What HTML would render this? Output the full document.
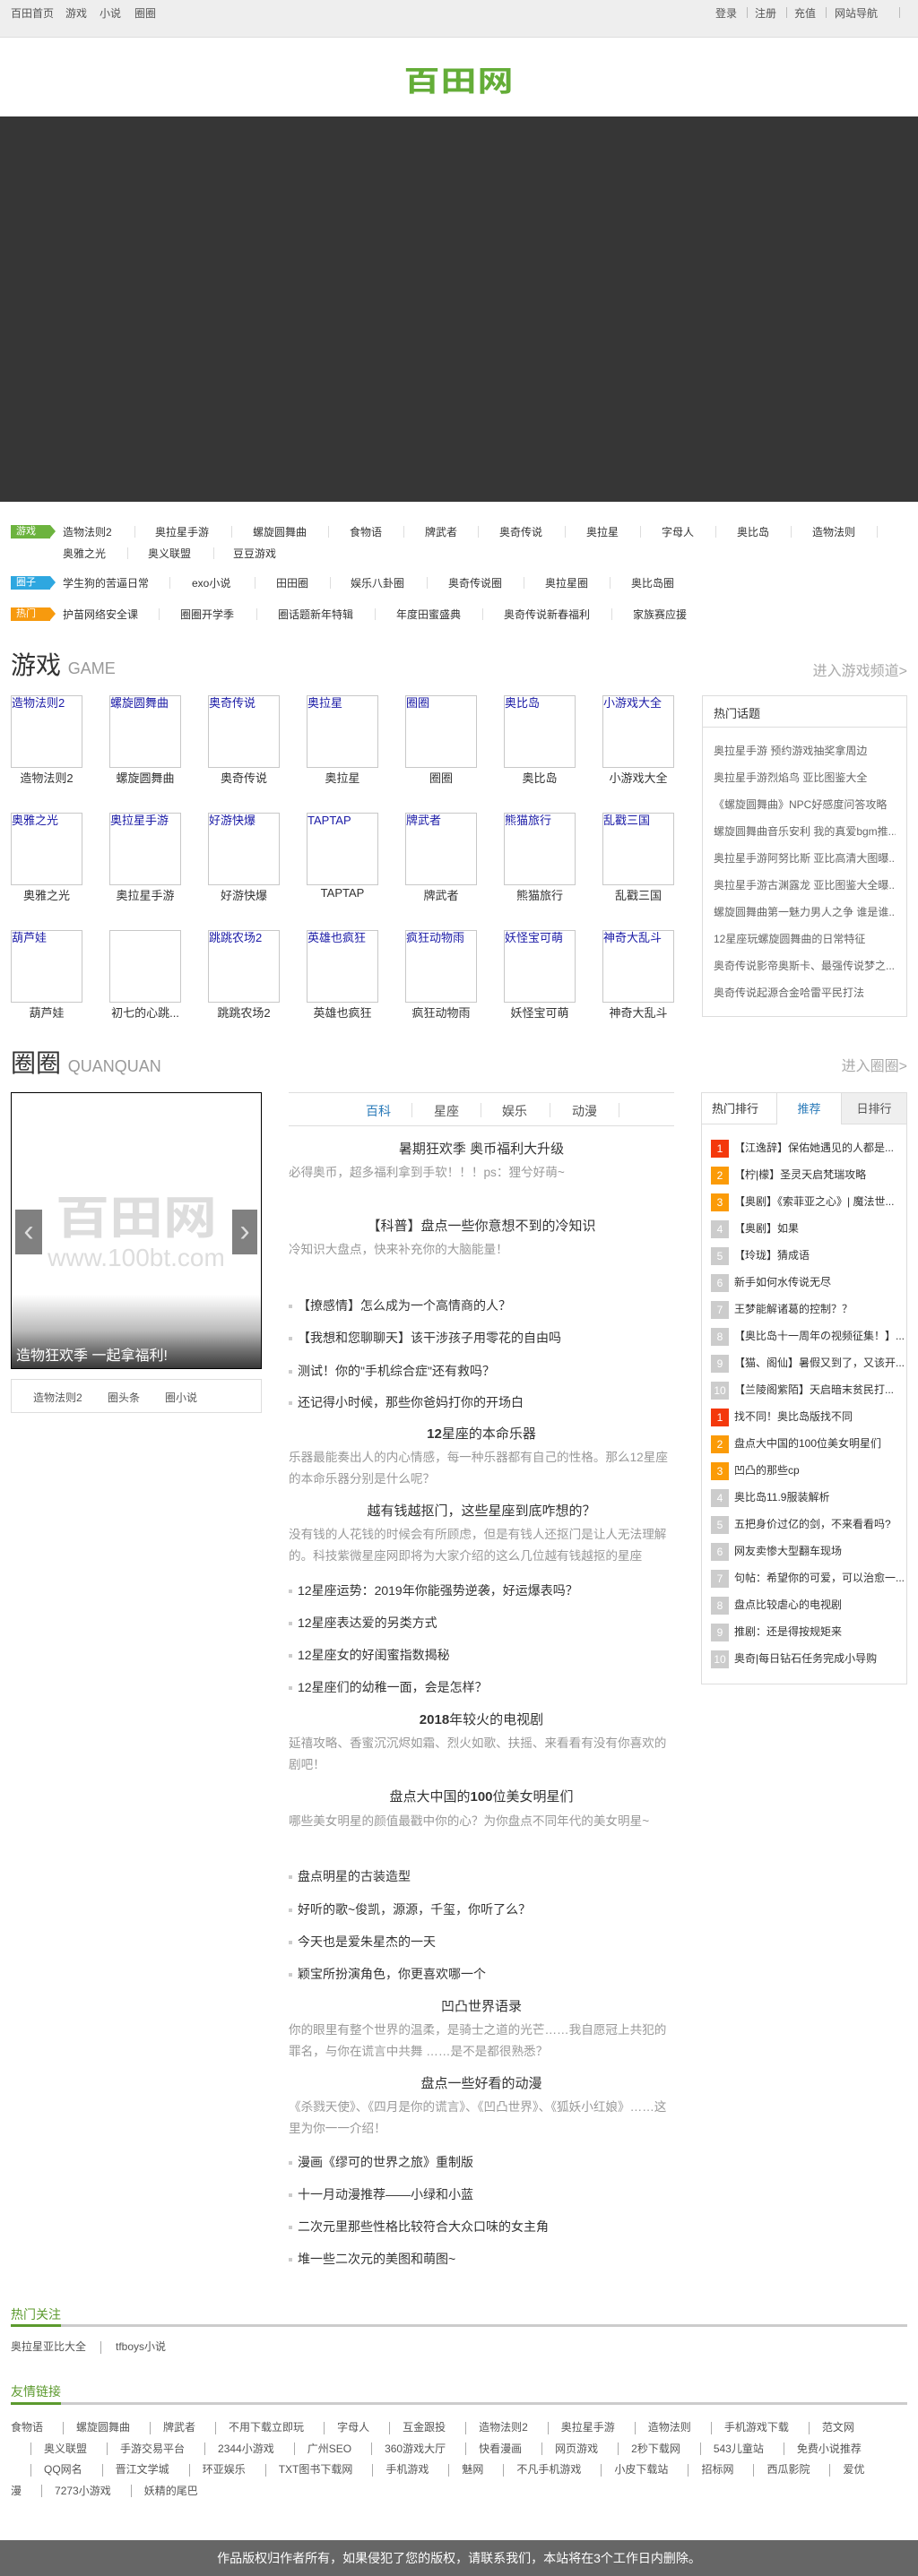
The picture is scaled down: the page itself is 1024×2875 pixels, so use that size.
<!DOCTYPE html>
<html><head><meta charset="utf-8">
<style>
*{margin:0;padding:0;box-sizing:border-box}
body{width:1024px;height:2875px;position:relative;background:#fff;font-family:"Liberation Sans","Noto Sans CJK SC",sans-serif;font-size:12px;color:#333;overflow:hidden}
.a{position:absolute;white-space:nowrap}
#top{position:absolute;left:0;top:0;width:1024px;height:42px;background:#eee;border-bottom:1px solid #ddd}
#top span{position:absolute;top:6px;font-size:12px;color:#555}
.sep{position:absolute;width:1px;height:12px;background:#bbb;top:8px}
.tag{position:absolute;left:12px;width:44px;height:15px;color:#fff;font-size:11px;line-height:15px;padding-left:6px}
.tag:after{content:"";position:absolute;right:-6px;top:0;border-left:6px solid;border-left-color:inherit;border-top:7.5px solid transparent;border-bottom:7.5px solid transparent}
.nl{position:absolute;font-size:12px;color:#333}
.ns{position:absolute;width:1px;height:13px;background:#ddd}
.cell{position:absolute;width:80px;height:81px;border:1px solid #c8c8c8;color:#1a1aa6;font-size:13px;line-height:16px;overflow:hidden;white-space:nowrap}
.lab{position:absolute;width:80px;text-align:center;font-size:13px;color:#333;white-space:nowrap}
.side li{list-style:none;height:30px;font-size:12px;color:#666;white-space:nowrap;overflow:hidden}
.rk{position:absolute;left:793px;font-size:12px;color:#333;white-space:nowrap}
.rk b{display:inline-block;width:20px;height:20px;line-height:20px;text-align:center;color:#fff;font-weight:normal;margin-right:6px;vertical-align:middle}
.t{position:absolute;left:322px;width:430px;text-align:center;font-size:15px;color:#333;white-space:nowrap}
.d{position:absolute;left:322px;width:430px;font-size:13.6px;line-height:24px;color:#999}
.li{position:absolute;left:322px;font-size:14px;color:#333;white-space:nowrap}
.li:before{content:"";display:inline-block;width:4px;height:4px;background:#ccc;margin-right:6px;vertical-align:middle}
.fl{position:absolute;left:12px;top:2698px;width:960px;font-size:12px;line-height:23.5px;color:#555;word-break:break-all}
.fl span{display:inline-block;width:1px;height:14px;background:#aaa;margin:0 14px 0 22px;vertical-align:middle}
</style></head><body>
<div id="top">
<span style="left:12px">百田首页</span><span style="left:73px">游戏</span><span style="left:111px">小说</span><span style="left:150px">圈圈</span>
<span style="left:798px">登录</span><div class="sep" style="left:833px"></div>
<span style="left:842px">注册</span><div class="sep" style="left:877px"></div>
<span style="left:886px">充值</span><div class="sep" style="left:921px"></div>
<span style="left:931px">网站导航</span><div class="sep" style="left:1003px"></div>
</div>
<div class="a" style="left:438px;top:68px;width:148px;text-align:center;font-size:40px;font-weight:bold;color:#64ad38;letter-spacing:1px;line-height:46px;transform:scaleY(0.8)">百田网</div>
<div class="a" style="left:0;top:130px;width:1024px;height:430px;background:#363636"></div>

<div class="tag" style="top:586px;background:#6cb33e;border-left-color:#6cb33e">游戏</div>
<div class="nl" style="left:70px;top:585px">造物法则2</div><div class="ns" style="left:150px;top:587px"></div>
<div class="nl" style="left:173px;top:585px">奥拉星手游</div><div class="ns" style="left:258px;top:587px"></div>
<div class="nl" style="left:282px;top:585px">螺旋圆舞曲</div><div class="ns" style="left:366px;top:587px"></div>
<div class="nl" style="left:390px;top:585px">食物语</div><div class="ns" style="left:450px;top:587px"></div>
<div class="nl" style="left:474px;top:585px">牌武者</div><div class="ns" style="left:533px;top:587px"></div>
<div class="nl" style="left:557px;top:585px">奥奇传说</div><div class="ns" style="left:630px;top:587px"></div>
<div class="nl" style="left:654px;top:585px">奥拉星</div><div class="ns" style="left:714px;top:587px"></div>
<div class="nl" style="left:738px;top:585px">字母人</div><div class="ns" style="left:798px;top:587px"></div>
<div class="nl" style="left:822px;top:585px">奥比岛</div><div class="ns" style="left:882px;top:587px"></div>
<div class="nl" style="left:906px;top:585px">造物法则</div><div class="ns" style="left:978px;top:587px"></div>
<div class="nl" style="left:70px;top:609px">奥雅之光</div><div class="ns" style="left:142px;top:611px"></div>
<div class="nl" style="left:165px;top:609px">奥义联盟</div><div class="ns" style="left:238px;top:611px"></div>
<div class="nl" style="left:260px;top:609px">豆豆游戏</div>

<div class="tag" style="top:643px;background:#2ea7e0;border-left-color:#2ea7e0">圈子</div>
<div class="nl" style="left:70px;top:642px">学生狗的苦逼日常</div><div class="ns" style="left:189px;top:644px"></div>
<div class="nl" style="left:214px;top:642px">exo小说</div><div class="ns" style="left:284px;top:644px"></div>
<div class="nl" style="left:308px;top:642px">田田圈</div><div class="ns" style="left:368px;top:644px"></div>
<div class="nl" style="left:391px;top:642px">娱乐八卦圈</div><div class="ns" style="left:476px;top:644px"></div>
<div class="nl" style="left:500px;top:642px">奥奇传说圈</div><div class="ns" style="left:584px;top:644px"></div>
<div class="nl" style="left:608px;top:642px">奥拉星圈</div><div class="ns" style="left:680px;top:644px"></div>
<div class="nl" style="left:704px;top:642px">奥比岛圈</div>

<div class="tag" style="top:678px;background:#f79a0e;border-left-color:#f79a0e">热门</div>
<div class="nl" style="left:70px;top:677px">护苗网络安全课</div><div class="ns" style="left:177px;top:679px"></div>
<div class="nl" style="left:201px;top:677px">圈圈开学季</div><div class="ns" style="left:286px;top:679px"></div>
<div class="nl" style="left:310px;top:677px">圈话题新年特辑</div><div class="ns" style="left:418px;top:679px"></div>
<div class="nl" style="left:442px;top:677px">年度田蜜盛典</div><div class="ns" style="left:538px;top:679px"></div>
<div class="nl" style="left:562px;top:677px">奥奇传说新春福利</div><div class="ns" style="left:682px;top:679px"></div>
<div class="nl" style="left:706px;top:677px">家族赛应援</div>

<div class="a" style="left:12px;top:726px;font-size:28px;color:#333;line-height:34px">游戏 <span style="font-size:18px;color:#999">GAME</span></div>
<div class="a" style="right:12px;top:735px;font-size:16px;color:#aaa">进入游戏频道&gt;</div>

<div class="cell" style="left:12px;top:776px">造物法则2</div><div class="lab" style="left:12px;top:858px">造物法则2</div>
<div class="cell" style="left:122px;top:776px">螺旋圆舞曲</div><div class="lab" style="left:122px;top:858px">螺旋圆舞曲</div>
<div class="cell" style="left:232px;top:776px">奥奇传说</div><div class="lab" style="left:232px;top:858px">奥奇传说</div>
<div class="cell" style="left:342px;top:776px">奥拉星</div><div class="lab" style="left:342px;top:858px">奥拉星</div>
<div class="cell" style="left:452px;top:776px">圈圈</div><div class="lab" style="left:452px;top:858px">圈圈</div>
<div class="cell" style="left:562px;top:776px">奥比岛</div><div class="lab" style="left:562px;top:858px">奥比岛</div>
<div class="cell" style="left:672px;top:776px">小游戏大全</div><div class="lab" style="left:672px;top:858px">小游戏大全</div>
<div class="cell" style="left:12px;top:907px">奥雅之光</div><div class="lab" style="left:12px;top:989px">奥雅之光</div>
<div class="cell" style="left:122px;top:907px">奥拉星手游</div><div class="lab" style="left:122px;top:989px">奥拉星手游</div>
<div class="cell" style="left:232px;top:907px">好游快爆</div><div class="lab" style="left:232px;top:989px">好游快爆</div>
<div class="cell" style="left:342px;top:907px">TAPTAP</div><div class="lab" style="left:342px;top:989px">TAPTAP</div>
<div class="cell" style="left:452px;top:907px">牌武者</div><div class="lab" style="left:452px;top:989px">牌武者</div>
<div class="cell" style="left:562px;top:907px">熊猫旅行</div><div class="lab" style="left:562px;top:989px">熊猫旅行</div>
<div class="cell" style="left:672px;top:907px">乱戳三国</div><div class="lab" style="left:672px;top:989px">乱戳三国</div>
<div class="cell" style="left:12px;top:1038px">葫芦娃</div><div class="lab" style="left:12px;top:1120px">葫芦娃</div>
<div class="cell" style="left:122px;top:1038px"></div><div class="lab" style="left:122px;top:1120px">初七的心跳...</div>
<div class="cell" style="left:232px;top:1038px">跳跳农场2</div><div class="lab" style="left:232px;top:1120px">跳跳农场2</div>
<div class="cell" style="left:342px;top:1038px">英雄也疯狂</div><div class="lab" style="left:342px;top:1120px">英雄也疯狂</div>
<div class="cell" style="left:452px;top:1038px">疯狂动物雨</div><div class="lab" style="left:452px;top:1120px">疯狂动物雨</div>
<div class="cell" style="left:562px;top:1038px">妖怪宝可萌</div><div class="lab" style="left:562px;top:1120px">妖怪宝可萌</div>
<div class="cell" style="left:672px;top:1038px">神奇大乱斗</div><div class="lab" style="left:672px;top:1120px">神奇大乱斗</div>

<div class="a side" style="left:783px;top:776px;width:229px;height:359px;border:1px solid #ddd">
<div style="height:35px;border-bottom:1px solid #ddd;padding:9px 12px;font-size:13px;color:#333">热门话题</div>
<ul style="padding:17px 12px 0">
<li>奥拉星手游 预约游戏抽奖拿周边</li><li>奥拉星手游烈焰鸟 亚比图鉴大全</li><li>《螺旋圆舞曲》NPC好感度问答攻略</li><li>螺旋圆舞曲音乐安利 我的真爱bgm推...</li><li>奥拉星手游阿努比斯 亚比高清大图曝...</li><li>奥拉星手游古渊露龙 亚比图鉴大全曝...</li><li>螺旋圆舞曲第一魅力男人之争 谁是谁...</li><li>12星座玩螺旋圆舞曲的日常特征</li><li>奥奇传说影帝奥斯卡、最强传说梦之...</li><li>奥奇传说起源合金哈雷平民打法</li>
</ul></div>

<div class="a" style="left:12px;top:1170px;font-size:28px;color:#333;line-height:34px">圈圈 <span style="font-size:18px;color:#999">QUANQUAN</span></div>
<div class="a" style="right:12px;top:1176px;font-size:16px;color:#aaa">进入圈圈&gt;</div>

<div class="a" style="left:12px;top:1219px;width:280px;height:309px;border:1px solid #000;background:linear-gradient(#fff 0,#fff 225px,#bbb 265px,#777 285px,#333 309px);overflow:hidden">
<div class="a" style="left:29px;top:110px;width:220px;text-align:center;font-size:60px;font-weight:bold;color:#ddd;line-height:60px;transform:scaleY(0.85)">百田网</div>
<div class="a" style="left:29px;top:168px;width:220px;text-align:center;font-size:28px;color:#ddd">www.100bt.com</div>
<div class="a" style="left:4px;top:130px;width:30px;height:50px;background:#808080;color:#ddd;font-size:34px;line-height:48px;text-align:center">‹</div>
<div class="a" style="left:246px;top:130px;width:28px;height:50px;background:#808080;color:#ddd;font-size:34px;line-height:48px;text-align:center">›</div>
<div class="a" style="left:5px;top:279px;font-size:16px;color:#fff">造物狂欢季 一起拿福利!</div>
</div>
<div class="a" style="left:12px;top:1539px;width:280px;height:38px;border:1px solid #ddd;font-size:12px;color:#555">
<span class="a" style="left:24px;top:11px">造物法则2</span><span class="a" style="left:107px;top:11px">圈头条</span><span class="a" style="left:171px;top:11px">圈小说</span></div>

<div class="a" style="left:322px;top:1219px;width:430px;height:38px;border-top:1px solid #ddd;border-bottom:1px solid #ddd;font-size:14px;color:#555">
<span class="a" style="left:86px;top:10px;color:#2b7bb9">百科</span><div class="ns" style="left:137px;top:11px;height:16px"></div>
<span class="a" style="left:162px;top:10px">星座</span><div class="ns" style="left:214px;top:11px;height:16px"></div>
<span class="a" style="left:238px;top:10px">娱乐</span><div class="ns" style="left:291px;top:11px;height:16px"></div>
<span class="a" style="left:316px;top:10px">动漫</span><div class="ns" style="left:368px;top:11px;height:16px"></div>
</div>

<div class="t" style="top:1271px">暑期狂欢季 奥币福利大升级</div>
<div class="d" style="top:1297px">必得奥币，超多福利拿到手软！！！ps：狸兮好萌~</div>
<div class="t" style="top:1357px">【科普】盘点一些你意想不到的冷知识</div>
<div class="d" style="top:1383px">冷知识大盘点，快来补充你的大脑能量！</div>
<div class="li" style="top:1447px">【撩感情】怎么成为一个高情商的人？</div>
<div class="li" style="top:1483px">【我想和您聊聊天】该干涉孩子用零花的自由吗</div>
<div class="li" style="top:1520px">测试！你的"手机综合症"还有救吗？</div>
<div class="li" style="top:1555px">还记得小时候，那些你爸妈打你的开场白</div>
<div class="t" style="top:1589px"><b>12</b>星座的本命乐器</div>
<div class="d" style="top:1615px">乐器最能奏出人的内心情感，每一种乐器都有自己的性格。那么12星座的本命乐器分别是什么呢？</div>
<div class="t" style="top:1675px">越有钱越抠门，这些星座到底咋想的？</div>
<div class="d" style="top:1701px">没有钱的人花钱的时候会有所顾虑，但是有钱人还抠门是让人无法理解的。科技紫微星座网即将为大家介绍的这么几位越有钱越抠的星座</div>
<div class="li" style="top:1765px">12星座运势：2019年你能强势逆袭，好运爆表吗？</div>
<div class="li" style="top:1801px">12星座表达爱的另类方式</div>
<div class="li" style="top:1837px">12星座女的好闺蜜指数揭秘</div>
<div class="li" style="top:1873px">12星座们的幼稚一面，会是怎样？</div>
<div class="t" style="top:1908px"><b>2018</b>年较火的电视剧</div>
<div class="d" style="top:1934px">延禧攻略、香蜜沉沉烬如霜、烈火如歌、扶摇、来看看有没有你喜欢的剧吧！</div>
<div class="t" style="top:1994px">盘点大中国的<b>100</b>位美女明星们</div>
<div class="d" style="top:2021px">哪些美女明星的颜值最戳中你的心？为你盘点不同年代的美女明星~</div>
<div class="li" style="top:2084px">盘点明星的古装造型</div>
<div class="li" style="top:2121px">好听的歌~俊凯，源源，千玺，你听了么？</div>
<div class="li" style="top:2157px">今天也是爱朱星杰的一天</div>
<div class="li" style="top:2193px">颖宝所扮演角色，你更喜欢哪一个</div>
<div class="t" style="top:2228px">凹凸世界语录</div>
<div class="d" style="top:2254px">你的眼里有整个世界的温柔，是骑士之道的光芒……我自愿冠上共犯的罪名，与你在谎言中共舞 ……是不是都很熟悉？</div>
<div class="t" style="top:2314px">盘点一些好看的动漫</div>
<div class="d" style="top:2340px">《杀戮天使》、《四月是你的谎言》、《凹凸世界》、《狐妖小红娘》……这里为你一一介绍！</div>
<div class="li" style="top:2403px">漫画《缪可的世界之旅》重制版</div>
<div class="li" style="top:2439px">十一月动漫推荐——小绿和小蓝</div>
<div class="li" style="top:2475px">二次元里那些性格比较符合大众口味的女主角</div>
<div class="li" style="top:2511px">堆一些二次元的美图和萌图~</div>

<div class="a" style="left:782px;top:1219px;width:230px;height:661px;border:1px solid #ddd"></div>
<div class="a" style="left:783px;top:1220px;width:84px;height:35px;border-right:1px solid #ddd;border-bottom:1px solid #ddd;font-size:13px;line-height:35px;padding-left:11px">热门排行</div>
<div class="a" style="left:867px;top:1220px;width:71px;height:35px;font-size:13px;line-height:35px;text-align:center;color:#2b7bb9">推荐</div>
<div class="a" style="left:938px;top:1220px;width:73px;height:35px;background:#efefef;border-left:1px solid #ddd;border-bottom:1px solid #ddd;font-size:13px;line-height:35px;text-align:center;color:#555">日排行</div>
<div class="rk" style="top:1272px"><b style="background:#f4380c">1</b>【江逸辞】保佑她遇见的人都是...</div>
<div class="rk" style="top:1302px"><b style="background:#fb9b07">2</b>【柠|檬】圣灵天启梵瑞攻略</div>
<div class="rk" style="top:1332px"><b style="background:#fb9b07">3</b>【奥剧】《索菲亚之心》| 魔法世...</div>
<div class="rk" style="top:1362px"><b style="background:#ccc">4</b>【奥剧】如果</div>
<div class="rk" style="top:1392px"><b style="background:#ccc">5</b>【玲珑】猜成语</div>
<div class="rk" style="top:1422px"><b style="background:#ccc">6</b>新手如何水传说无尽</div>
<div class="rk" style="top:1452px"><b style="background:#ccc">7</b>王梦能解诸葛的控制？？</div>
<div class="rk" style="top:1482px"><b style="background:#ccc">8</b>【奥比岛十一周年の视频征集！】...</div>
<div class="rk" style="top:1512px"><b style="background:#ccc">9</b>【猫、阁仙】暑假又到了，又该开...</div>
<div class="rk" style="top:1542px"><b style="background:#ccc">10</b>【兰陵阁紫陌】天启暗末贫民打...</div>
<div class="rk" style="top:1572px"><b style="background:#f4380c">1</b>找不同！奥比岛版找不同</div>
<div class="rk" style="top:1602px"><b style="background:#fb9b07">2</b>盘点大中国的100位美女明星们</div>
<div class="rk" style="top:1632px"><b style="background:#fb9b07">3</b>凹凸的那些cp</div>
<div class="rk" style="top:1662px"><b style="background:#ccc">4</b>奥比岛11.9服装解析</div>
<div class="rk" style="top:1692px"><b style="background:#ccc">5</b>五把身价过亿的剑，不来看看吗?</div>
<div class="rk" style="top:1722px"><b style="background:#ccc">6</b>网友卖惨大型翻车现场</div>
<div class="rk" style="top:1752px"><b style="background:#ccc">7</b>句帖：希望你的可爱，可以治愈一...</div>
<div class="rk" style="top:1782px"><b style="background:#ccc">8</b>盘点比较虐心的电视剧</div>
<div class="rk" style="top:1812px"><b style="background:#ccc">9</b>推剧：还是得按规矩来</div>
<div class="rk" style="top:1842px"><b style="background:#ccc">10</b>奥奇|每日钻石任务完成小导购</div>

<div class="a" style="left:12px;top:2573px;font-size:14px;color:#5c9a2e">热门关注</div>
<div class="a" style="left:12px;top:2594px;width:1000px;height:3px;background:#ccc"></div>
<div class="a" style="left:12px;top:2594px;width:56px;height:3px;background:#5c9a2e"></div>
<div class="a" style="left:12px;top:2610px;font-size:12px;color:#555">奥拉星亚比大全<span style="display:inline-block;width:1px;height:14px;background:#aaa;margin:0 16px;vertical-align:middle"></span>tfboys小说</div>

<div class="a" style="left:12px;top:2659px;font-size:14px;color:#5c9a2e">友情链接</div>
<div class="a" style="left:12px;top:2681px;width:1000px;height:3px;background:#ccc"></div>
<div class="a" style="left:12px;top:2681px;width:56px;height:3px;background:#5c9a2e"></div>
<div class="fl">食物语<span></span>螺旋圆舞曲<span></span>牌武者<span></span>不用下载立即玩<span></span>字母人<span></span>互金跟投<span></span>造物法则2<span></span>奥拉星手游<span></span>造物法则<span></span>手机游戏下载<span></span>范文网<span></span>奥义联盟<span></span>手游交易平台<span></span>2344小游戏<span></span>广州SEO<span></span>360游戏大厅<span></span>快看漫画<span></span>网页游戏<span></span>2秒下载网<span></span>543儿童站<span></span>免费小说推荐<span></span>QQ网名<span></span>晋江文学城<span></span>环亚娱乐<span></span>TXT图书下载网<span></span>手机游戏<span></span>魅网<span></span>不凡手机游戏<span></span>小皮下载站<span></span>招标网<span></span>西瓜影院<span></span>爱优漫<span></span>7273小游戏<span></span>妖精的尾巴</div>

<div class="a" style="left:0;top:2835px;width:1024px;height:40px;background:#666;color:#fff;font-size:14px;line-height:40px;text-align:center">作品版权归作者所有，如果侵犯了您的版权，请联系我们，本站将在3个工作日内删除。</div>
</body></html>
